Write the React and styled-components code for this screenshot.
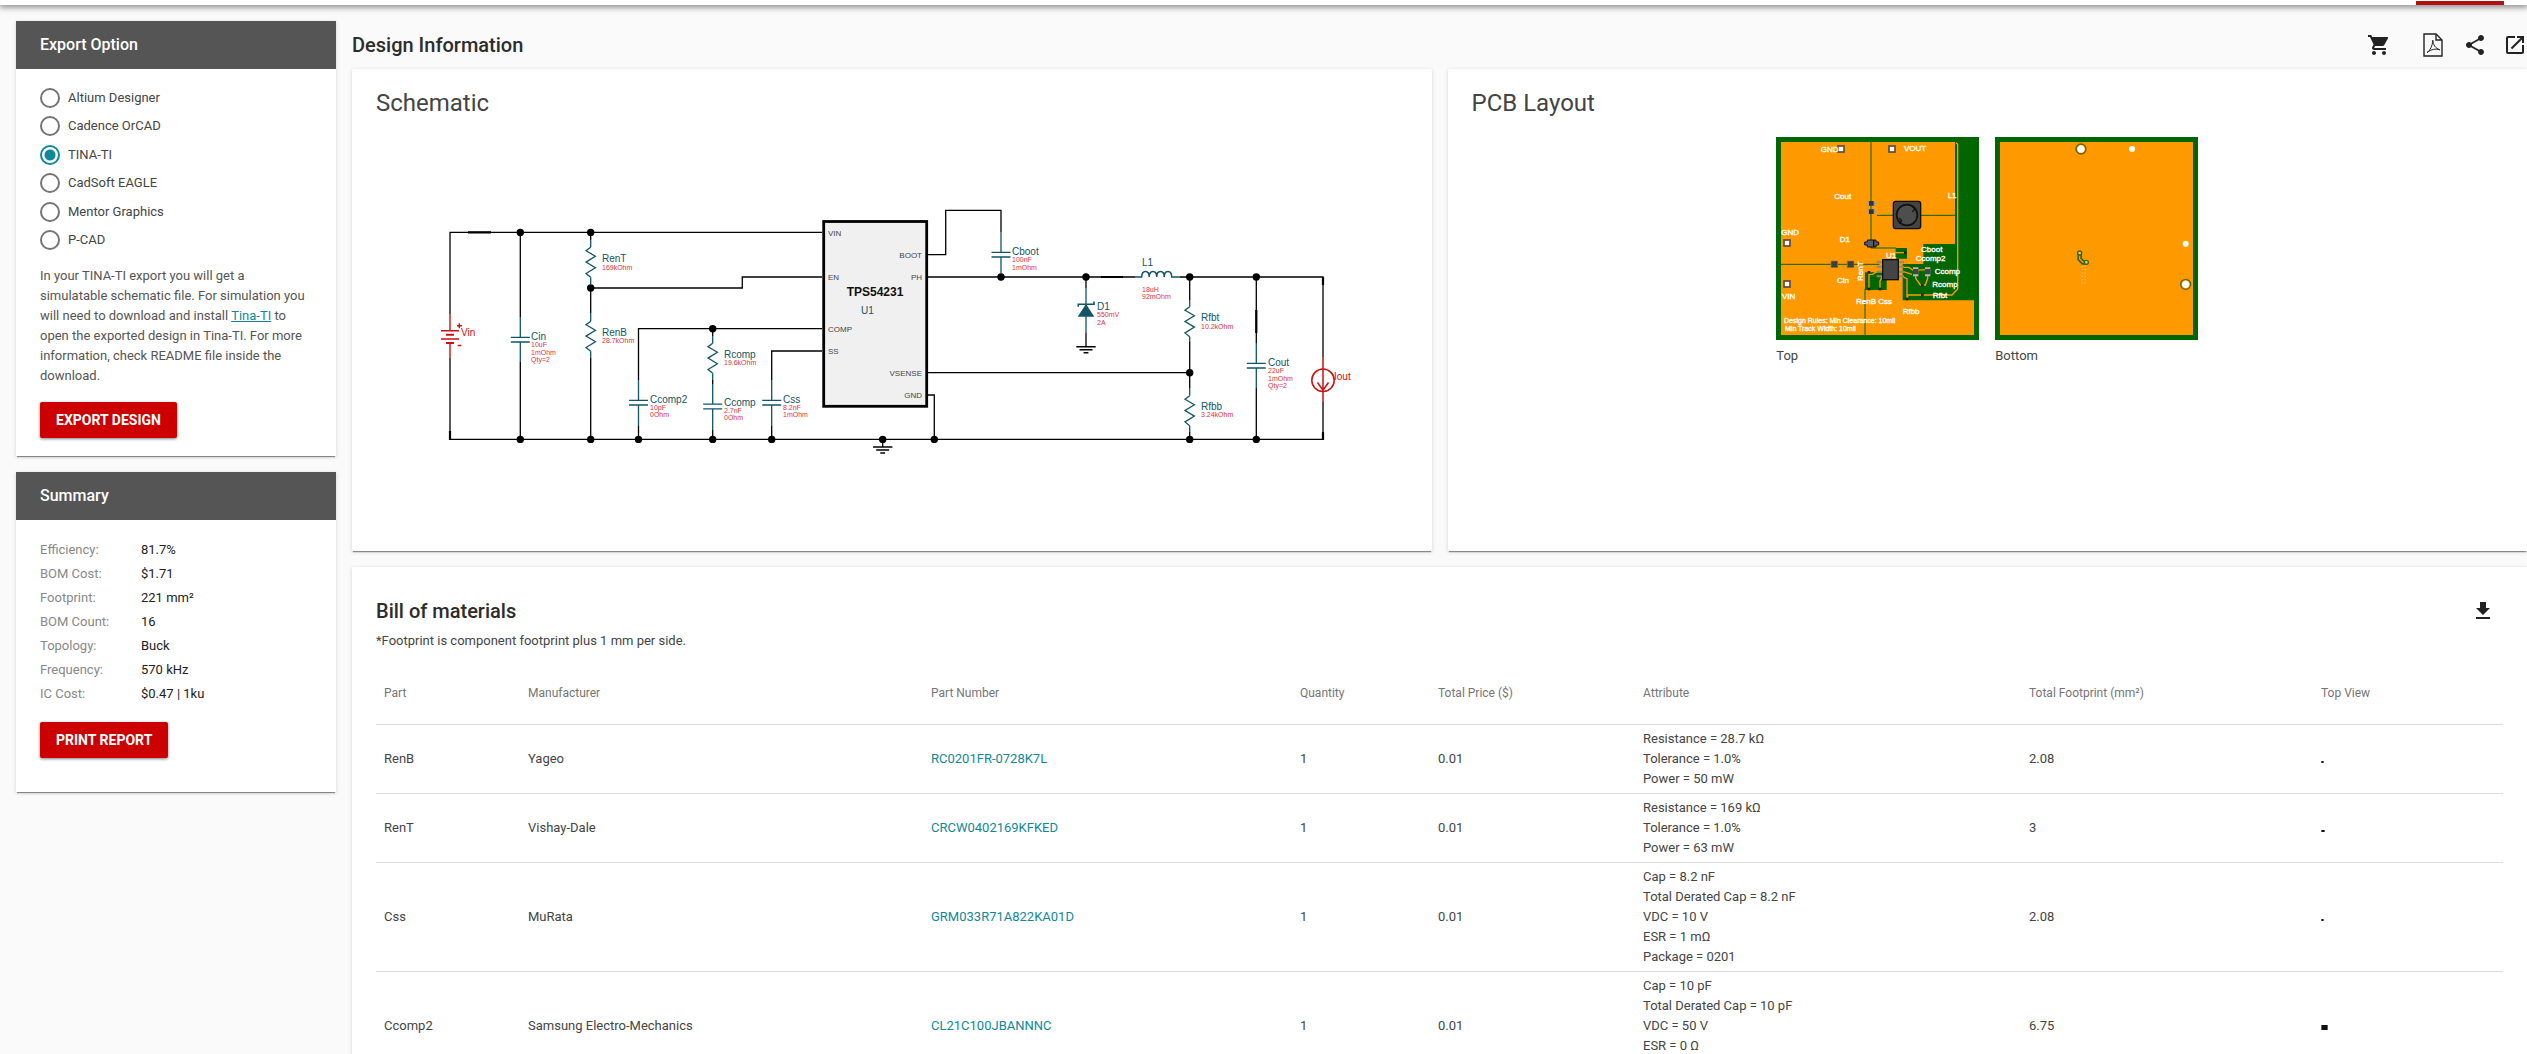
import React, { useState } from "react";
import styled, { createGlobalStyle } from "styled-components";
import { MdOpenInNew, MdShare, MdShoppingCart } from "react-icons/md";

const TEAL = "#118899";
const PART = "#115566";
const VALUE = "#dd3340";
const SOURCE = "#cc1111";
const ORANGE = "#ff9900";
const BOARD = "#006600";

const exportTools = [
  "Altium Designer",
  "Cadence OrCAD",
  "TINA-TI",
  "CadSoft EAGLE",
  "Mentor Graphics",
  "P-CAD",
];

const summary = [
  ["Efficiency:", "81.7%"],
  ["BOM Cost:", "$1.71"],
  ["Footprint:", "221 mm²"],
  ["BOM Count:", "16"],
  ["Topology:", "Buck"],
  ["Frequency:", "570 kHz"],
  ["IC Cost:", "$0.47 | 1ku"],
];

const columns = [
  { title: "Part", share: 144 },
  { title: "Manufacturer", share: 403 },
  { title: "Part Number", share: 369 },
  { title: "Quantity", share: 138 },
  { title: "Total Price ($)", share: 205 },
  { title: "Attribute", share: 386 },
  { title: "Total Footprint (mm²)", share: 292 },
  { title: "Top View", share: 190 },
];
const totalShare = columns.reduce((sum, { share }) => sum + share, 0);

const parts = [
  {
    part: "RenB",
    maker: "Yageo",
    number: "RC0201FR-0728K7L",
    quantity: 1,
    price: "0.01",
    attributes: ["Resistance = 28.7 kΩ", "Tolerance = 1.0%", "Power = 50 mW"],
    footprint: "2.08",
    view: [3, 2],
  },
  {
    part: "RenT",
    maker: "Vishay-Dale",
    number: "CRCW0402169KFKED",
    quantity: 1,
    price: "0.01",
    attributes: ["Resistance = 169 kΩ", "Tolerance = 1.0%", "Power = 63 mW"],
    footprint: "3",
    view: [4, 2],
  },
  {
    part: "Css",
    maker: "MuRata",
    number: "GRM033R71A822KA01D",
    quantity: 1,
    price: "0.01",
    attributes: [
      "Cap = 8.2 nF",
      "Total Derated Cap = 8.2 nF",
      "VDC = 10 V",
      "ESR = 1 mΩ",
      "Package = 0201",
    ],
    footprint: "2.08",
    view: [3, 2],
  },
  {
    part: "Ccomp2",
    maker: "Samsung Electro-Mechanics",
    number: "CL21C100JBANNNC",
    quantity: 1,
    price: "0.01",
    attributes: [
      "Cap = 10 pF",
      "Total Derated Cap = 10 pF",
      "VDC = 50 V",
      "ESR = 0 Ω",
      "Package = 0805",
    ],
    footprint: "6.75",
    view: [7, 5],
  },
];

/* ---------- schematic ---------- */

const Zigzag = ({ x, y }) => (
  <path
    d={`M${x} ${y}l-4.7 3.5 9.4 5.5-9.4 5.8 9.4 5.6-9.4 5.8 4.7 3.8`}
    fill="none"
    stroke={PART}
    strokeWidth="1.3"
  />
);

const Resistor = ({ x, from, y, to }) => (
  <g>
    <path d={`M${x} ${from}V${y}M${x} ${y + 30}V${to}`} stroke={PART} strokeWidth="1.3" />
    <Zigzag x={x} y={y} />
  </g>
);

const Capacitor = ({ x, from, y, to }) => (
  <path
    d={`M${x} ${from}V${y}M${x - 9.5} ${y}h19M${x - 9.5} ${y + 4.7}h19M${x} ${y + 4.7}V${to}`}
    stroke={PART}
    strokeWidth="1.3"
  />
);

const Ground = ({ x, y }) => (
  <path
    d={`M${x - 9.7} ${y}h19.4M${x - 6.5} ${y + 3}h13M${x - 2.4} ${y + 6}h4.8`}
    stroke="#000"
    strokeWidth="1.4"
  />
);

const Label = ({ x, y, name, values = [], offsets = [7, 15, 22] }) => (
  <g>
    <NameText x={x} y={y}>
      {name}
    </NameText>
    {values.map((value, i) => (
      <ValueText key={value} x={x} y={y + offsets[i]}>
        {value}
      </ValueText>
    ))}
  </g>
);

const junctions = [
  [520.3, 232.4],
  [590.7, 232.4],
  [590.7, 288],
  [712.7, 328.7],
  [520.3, 439.4],
  [590.7, 439.4],
  [638.5, 439.4],
  [712.7, 439.4],
  [771.7, 439.4],
  [882.7, 439.4],
  [934.3, 439.4],
  [1001, 277],
  [1086, 277],
  [1189.7, 277],
  [1256.3, 277],
  [1189.7, 372.7],
  [1189.7, 439.4],
  [1256.3, 439.4],
];

const leftPins = [
  ["VIN", 236],
  ["EN", 280],
  ["COMP", 332],
  ["SS", 354],
];

const rightPins = [
  ["BOOT", 258],
  ["PH", 280],
  ["VSENSE", 376],
  ["GND", 398],
];

function Schematic() {
  return (
    <SchematicDrawing viewBox="432 125 920 410" role="img" aria-label="Schematic">
      {/* wires */}
      <g fill="none" stroke="#000" strokeWidth="1.3">
        <path d="M450 314V232.4H822M450 358V439.4H1323V402" />
        <path d="M520.3 232.4V317M520.3 362V439.4" />
        <path d="M590.7 232.4V240M590.7 288V313M590.7 358V439.4" />
        <path d="M590.7 288H742.3V277H822" />
        <path d="M638.5 380V328.7H822M638.5 426V439.4" />
        <path d="M712.7 328.7V336M712.7 380V384M712.7 430V439.4" />
        <path d="M771.7 380V351H822M771.7 426V439.4" />
        <path d="M928 254.7H945.7V210.3H1001V232" />
        <path d="M928 277H1135M1180 277H1323V357" />
        <path d="M928 372.7H1189.7M928 395H934.3V439.4" />
        <path d="M882.7 439.4V447M1086 277V288M1086 333V346.7" />
        <path d="M1189.7 277V300M1189.7 342V388M1189.7 432V439.4" />
        <path d="M1256.3 277V343M1256.3 388V439.4" />
      </g>
      <g stroke="#000" strokeWidth="2.2">
        <path d="M468 232.4H491M1101 277H1123M1256.3 310V333" />
        <path d="M450 431V440M1323 277V285M1323 432V440" />
      </g>
      {junctions.map(([x, y]) => (
        <circle key={`${x}-${y}`} cx={x} cy={y} r="3.7" />
      ))}
      <Ground x={882.7} y={447} />
      <Ground x={1086} y={346.7} />

      {/* input source */}
      <g stroke={SOURCE}>
        <path
          d="M450 314V330.7M441 330.7H459M441 339H459M450 343V358M457 325.7h5M459.3 323.3v5M457.7 345.5h3.6"
          strokeWidth="1.4"
        />
        <path d="M446 334.8H454M446 343H454" strokeWidth="2" />
      </g>
      <NameText x="461" y="336" $source>
        Vin
      </NameText>

      <Capacitor x={520.3} from={317} y={337.3} to={362} />
      <Label x={531} y={340} name="Cin" values={["10uF", "1mOhm", "Qty=2"]} />

      <Resistor x={590.7} from={240} y={247.3} to={285} />
      <Label x={602} y={262} name="RenT" values={["169kOhm"]} offsets={[8]} />
      <Resistor x={590.7} from={313} y={321.3} to={358} />
      <Label x={602} y={336} name="RenB" values={["28.7kOhm"]} />

      <Capacitor x={638.5} from={380} y={400.3} to={426} />
      <Label x={650} y={403} name="Ccomp2" values={["10pF", "0Ohm"]} offsets={[7, 14]} />

      <Resistor x={712.7} from={336} y={343.3} to={380} />
      <Label x={724} y={358} name="Rcomp" values={["19.6kOhm"]} />
      <Capacitor x={712.7} from={384} y={404.2} to={430} />
      <Label x={724} y={406} name="Ccomp" values={["2.7nF", "0Ohm"]} offsets={[7, 14]} />

      <Capacitor x={771.7} from={380} y={400.3} to={426} />
      <Label x={783} y={403} name="Css" values={["8.2nF", "1mOhm"]} offsets={[7, 14]} />

      {/* regulator */}
      <rect x="823.7" y="221.5" width="103" height="184.8" fill="#f0f0f0" stroke="#000" strokeWidth="2.8" />
      {leftPins.map(([pin, y]) => (
        <PinText key={pin} x="828" y={y}>
          {pin}
        </PinText>
      ))}
      {rightPins.map(([pin, y]) => (
        <PinText key={pin} x="922" y={y} textAnchor="end">
          {pin}
        </PinText>
      ))}
      <ChipText x="875" y="296" textAnchor="middle">
        TPS54231
      </ChipText>
      <NameText x="861" y="314">
        U1
      </NameText>

      <Capacitor x={1001} from={232} y={252.3} to={274} />
      <Label x={1012} y={255} name="Cboot" values={["100nF", "1mOhm"]} />

      {/* catch diode */}
      <path d="M1086 288V333" stroke={PART} strokeWidth="1.3" />
      <path d="M1078.3 306.7V304.2H1094V301.5" fill="none" stroke={PART} strokeWidth="1.6" />
      <path d="M1086 304L1094.3 316.7H1077.7Z" fill={PART} />
      <Label x={1097} y={310} name="D1" values={["550mV", "2A"]} />

      {/* inductor */}
      <path
        d="M1135 277H1141.7c0-7.5 7.5-7.5 7.5 0c0-7.5 7.5-7.5 7.5 0c0-7.5 7.5-7.5 7.5 0c0-7.5 7.5-7.5 7.5 0H1180"
        fill="none"
        stroke={PART}
        strokeWidth="1.5"
      />
      <Label x={1142} y={266} name="L1" values={["18uH", "92mOhm"]} offsets={[26, 33]} />

      <Resistor x={1189.7} from={300} y={306.7} to={342} />
      <Label x={1201} y={321} name="Rfbt" values={["10.2kOhm"]} offsets={[8]} />
      <Resistor x={1189.7} from={388} y={395.7} to={432} />
      <Label x={1201} y={410} name="Rfbb" values={["3.24kOhm"]} />

      <Capacitor x={1256.3} from={343} y={363.3} to={388} />
      <Label x={1268} y={366} name="Cout" values={["22uF", "1mOhm", "Qty=2"]} />

      {/* load */}
      <g fill="none" stroke={SOURCE} strokeWidth="1.5">
        <path d="M1323 357V402M1317.5 382.5L1323 390.3L1328.5 382.5" />
        <circle cx="1323" cy="380.3" r="11.2" />
      </g>
      <NameText x="1334" y="380" $source>
        Iout
      </NameText>
    </SchematicDrawing>
  );
}

/* ---------- board ---------- */

const boardLabels = [
  ["GND", 134, 44],
  ["VOUT", 384, 43],
  ["Cout", 175, 185],
  ["L1", 515, 182],
  ["GND", 16, 293],
  ["D1", 191, 314],
  ["U1", 330, 363],
  ["Cboot", 435, 345],
  ["Ccomp2", 419, 371],
  ["Ccomp", 476, 411],
  ["Rcomp", 469, 450],
  ["Rfbt", 470, 482],
  ["RenB Css", 240, 500],
  ["Rfbb", 380, 530],
  ["Cin", 183, 437],
  ["VIN", 18, 485],
];

const terminals = [
  [195, 36],
  [348, 36],
  [33, 318],
  [33, 441],
];

const smallPads = [
  [279, 406],
  [279, 456],
  [312, 456],
  [439, 445],
  [439, 474],
  [393, 486],
  [388, 347],
];

function TopBoard() {
  return (
    <Board viewBox="0 0 609 609" role="img" aria-label="Top">
      <rect width="609" height="609" fill={BOARD} />
      <path
        d="M15 15H538V321H442V381H380V490H594V594H15Z"
        fill={ORANGE}
      />
      <path d="M359 333h34v32h-34zM267 406h65v53h-65z" fill={BOARD} />
      <path
        d="M285 15V333H360M303 235H538M15 382H310M267 455V594"
        fill="none"
        stroke={BOARD}
        strokeWidth="3"
      />
      <path d="M539 15V321" stroke={BOARD} strokeWidth="4" />
      <g fill="none" stroke={ORANGE} strokeWidth="4">
        <path d="M540 17L545 22V456L528 474H396L393 486V425L382 420" />
        <path d="M382 391H398L412 400L455 398M382 404L408 412M419 412V424L433 444H448L455 424V412" />
        <path d="M279 406V456M279 412H290L303 404M312 456V432L318 420" />
        <path d="M388 347H352" />
      </g>

      {/* L1 */}
      <rect x="352" y="193" width="82" height="82" rx="7" fill="#444" stroke="#111" strokeWidth="4" />
      <circle cx="393" cy="234" r="31" fill="#4e4e4e" stroke="#111" strokeWidth="5" />
      <path d="M409 208l8 8-8 8M369 243l8 8-8 8" fill="none" stroke="#111" strokeWidth="4" />

      {/* Cout, Cin */}
      <path d="M275 193h22v14h-22zM275 216h22v14h-22z" fill="#999" />
      <path d="M279 192h14v14h-14zM279 217h14v14h-14z" fill="#333" />
      <path d="M164 371h22v22h-22zM212 371h22v22h-22z" fill="#a67a33" />
      <path d="M166 373h18v18h-18zM215 373h18v18h-18z" fill="#3f3f3f" />

      {/* D1 */}
      <path d="M266 315h8v-6h26v6h8v9h-8v6h-26v-6h-8z" fill="#565d70" stroke="#111" strokeWidth="3" />
      <path d="M293 309v21" stroke="#111" strokeWidth="4" />

      {/* U1 */}
      <path
        d="M302 376h16M302 389h16M302 404h16M302 418h16M368 376h16M368 389h16M368 404h16M368 418h16"
        stroke="#8d8d6a"
        strokeWidth="6"
      />
      <rect x="320" y="368" width="47" height="60" fill="#444" stroke="#111" strokeWidth="4" />

      {/* Ccomp, Ccomp2 */}
      <path d="M411 391h16v27h-16zM447 391h16v27h-16z" fill="#b9b9b9" />
      <path d="M411 396h16v16h-16zM447 396h16v16h-16z" fill="#444" />
      {smallPads.map(([x, y]) => (
        <rect key={`${x}-${y}`} x={x - 4} y={y - 4} width="8" height="8" fill="#222" />
      ))}
      {terminals.map(([x, y]) => (
        <rect
          key={`${x}-${y}`}
          x={x - 9}
          y={y - 9}
          width="18"
          height="18"
          fill="#fff"
          stroke="#5d4a44"
          strokeWidth="5"
        />
      ))}

      {boardLabels.map(([text, x, y]) => (
        <SilkText key={`${text}-${y}`} x={x} y={y}>
          {text}
        </SilkText>
      ))}
      <SilkText transform="translate(261 432) rotate(-90)">RenT</SilkText>
      <SilkText x="24" y="558" $small>
        Design Rules: Min Clearance: 10mil
      </SilkText>
      <SilkText x="27" y="581" $small>
        Min Track Width: 10mil
      </SilkText>
    </Board>
  );
}

function BottomBoard() {
  const vias = [0, 1, 2, 3, 4, 5];
  return (
    <Board viewBox="0 0 609 609" role="img" aria-label="Bottom">
      <rect width="609" height="609" fill={BOARD} />
      <rect x="15" y="15" width="579" height="579" fill={ORANGE} />
      <g stroke="#5c6600" strokeWidth="4">
        <circle cx="258" cy="36" r="15" fill={ORANGE} />
        <circle cx="572" cy="442" r="15" fill={ORANGE} />
      </g>
      <g fill="#fff">
        <circle cx="258" cy="36" r="11" />
        <circle cx="572" cy="442" r="11" />
        <circle cx="411" cy="36" r="9" />
        <circle cx="572" cy="320" r="9" />
      </g>
      <g fill="none" strokeLinecap="round">
        <path d="M254 349V366L264 376H273" stroke="#336600" strokeWidth="14" />
        <path d="M254 349V366L264 376H273" stroke={ORANGE} strokeWidth="4" />
      </g>
      <g fill="#ffcc66" stroke="#336600" strokeWidth="4">
        <circle cx="254" cy="348" r="6" />
        <circle cx="274" cy="376" r="6" />
      </g>
      {vias.map((i) => (
        <path key={i} d={`M260 ${388 + i * 10}h3M269 ${388 + i * 10}h3`} stroke="#ffd9a0" strokeWidth="3" />
      ))}
    </Board>
  );
}

const PdfIcon = () => (
  <svg width="24" height="24" viewBox="0 0 24 24" fill="none" stroke="currentColor" aria-hidden="true">
    <path d="M1 1h12l6 6v16H1z" strokeWidth="1.4" />
    <path d="M13 1v6h6" strokeWidth="1.4" />
    <path
      d="M4 19.5c3-2 5.500-6.500 5.800-12.300.4 4.600 2.500 8 7 9.600-4.300-1.300-8.400-.6-12.800 2.700z"
      strokeWidth="1"
      strokeLinejoin="round"
    />
  </svg>
);

const DownloadIcon = () => (
  <svg width="24" height="24" viewBox="0 0 24 24" fill="currentColor" aria-hidden="true">
    <path d="M19 9h-4V3H9v6H5l7 7 7-7zM5 18v2h14v-2H5z" />
  </svg>
);

function ExportCard() {
  const [tool, setTool] = useState("TINA-TI");

  return (
    <Card as="section">
      <CardHead>Export Option</CardHead>
      <ExportBody>
        <Options>
          {exportTools.map((name) => (
            <Option key={name}>
              <Radio name="tool" value={name} checked={tool === name} onChange={() => setTool(name)} />
              {name}
            </Option>
          ))}
        </Options>
        <Hint>
          In your TINA-TI export you will get a simulatable schematic file. For simulation you will need to
          download and install <HintLink href="#tina">Tina-TI</HintLink> to open the exported design in
          Tina-TI. For more information, check README file inside the download.
        </Hint>
        <Button type="button">Export Design</Button>
      </ExportBody>
    </Card>
  );
}

function SummaryCard() {
  return (
    <Card as="section">
      <CardHead>Summary</CardHead>
      <SummaryBody>
        <Facts>
          {summary.map(([name, value]) => (
            <React.Fragment key={name}>
              <dt>{name}</dt>
              <dd>{value}</dd>
            </React.Fragment>
          ))}
        </Facts>
        <Button type="button">Print Report</Button>
      </SummaryBody>
    </Card>
  );
}

function Materials() {
  return (
    <MaterialsCard as="section">
      <MaterialsHead>
        <Heading>Bill of materials</Heading>
        <IconButton type="button" aria-label="Download">
          <DownloadIcon />
        </IconButton>
      </MaterialsHead>
      <Note>*Footprint is component footprint plus 1 mm per side.</Note>
      <Table>
        <colgroup>
          {columns.map(({ title, share }) => (
            <Column key={title} $width={(share / totalShare) * 100} />
          ))}
        </colgroup>
        <thead>
          <tr>
            {columns.map(({ title }) => (
              <th key={title}>{title}</th>
            ))}
          </tr>
        </thead>
        <tbody>
          {parts.map((item) => (
            <tr key={item.part}>
              <td>{item.part}</td>
              <td>{item.maker}</td>
              <td>
                <PartLink href={`#${item.number}`}>{item.number}</PartLink>
              </td>
              <td>{item.quantity}</td>
              <td>{item.price}</td>
              <td>
                {item.attributes.map((attribute) => (
                  <div key={attribute}>{attribute}</div>
                ))}
              </td>
              <td>{item.footprint}</td>
              <td>
                <svg width={item.view[0]} height={item.view[1]} aria-hidden="true">
                  <rect width="100%" height="100%" fill="#666" />
                  <rect x="1" width={item.view[0] - 2} height="100%" fill="#111" />
                </svg>
              </td>
            </tr>
          ))}
        </tbody>
      </Table>
    </MaterialsCard>
  );
}

function App() {
  return (
    <>
      <GlobalStyle />
      <Shell>
        <TopBar>
          <ActiveTab />
        </TopBar>
        <Page>
          <Sidebar>
            <ExportCard />
            <SummaryCard />
          </Sidebar>
          <Main>
            <Toolbar>
              <Heading>Design Information</Heading>
              <Actions>
                <IconButton type="button" aria-label="Order" $spaced>
                  <MdShoppingCart size={24} />
                </IconButton>
                <IconButton type="button" aria-label="Save as PDF">
                  <PdfIcon />
                </IconButton>
                <IconButton type="button" aria-label="Share">
                  <MdShare size={24} />
                </IconButton>
                <IconButton type="button" aria-label="Open">
                  <MdOpenInNew size={24} />
                </IconButton>
              </Actions>
            </Toolbar>
            <Drawings>
              <DrawingCard as="section">
                <CardTitle>Schematic</CardTitle>
                <Schematic />
              </DrawingCard>
              <DrawingCard as="section">
                <CardTitle>PCB Layout</CardTitle>
                <Boards>
                  <figure>
                    <TopBoard />
                    <figcaption>Top</figcaption>
                  </figure>
                  <figure>
                    <BottomBoard />
                    <figcaption>Bottom</figcaption>
                  </figure>
                </Boards>
              </DrawingCard>
            </Drawings>
            <Materials />
          </Main>
        </Page>
      </Shell>
    </>
  );
}

export default App;

const GlobalStyle = createGlobalStyle`
  * {
    box-sizing: border-box;
  }
  body {
    margin: 0;
    background: #fafafa;
    color: #444;
    font: 400 13px/20px Roboto, "Liberation Sans", sans-serif;
  }
`;

const Shell = styled.div`
  height: 100vh;
  overflow: hidden auto;
  scrollbar-width: none;
`;

const TopBar = styled.header`
  display: flex;
  align-items: flex-end;
  justify-content: flex-end;
  height: 5px;
  padding-right: 23px;
  background: #fff;
  box-shadow: 0 1px 6px 1px rgba(0, 0, 0, 0.5);
`;

const ActiveTab = styled.div`
  width: 88px;
  height: 4px;
  background: #b10f10;
`;

const Page = styled.div`
  display: grid;
  grid-template-columns: 320px minmax(0, 1fr);
  gap: 16px;
  align-items: start;
  padding: 16px 0 16px 16px;
`;

const Sidebar = styled.aside`
  display: grid;
  gap: 16px;
`;

const Main = styled.main`
  display: grid;
`;

const Card = styled.div`
  background: #fff;
  box-shadow: 0 2px 1px -1px rgba(0, 0, 0, 0.4), 0 1px 4px rgba(0, 0, 0, 0.16);
`;

const CardHead = styled.h2`
  margin: 0;
  padding: 0 24px;
  background: #555;
  color: #fff;
  font-size: 16px;
  font-weight: 500;
  line-height: 48px;
`;

const ExportBody = styled.div`
  padding: 19px 24px 18px;
`;

const Options = styled.div`
  display: flex;
  flex-direction: column;
  justify-content: space-between;
  height: 162px;
`;

const Option = styled.label`
  display: flex;
  align-items: center;
  gap: 8px;
  height: 20px;
`;

const Radio = styled.input.attrs({ type: "radio" })`
  appearance: none;
  width: 20px;
  height: 20px;
  margin: 0;
  border: 2px solid #757575;
  border-radius: 50%;
  &:checked {
    border-color: ${TEAL};
    background: radial-gradient(circle, ${TEAL} 5px, transparent 6px);
  }
`;

const Hint = styled.p`
  margin: 16px 0;
  color: #555;
`;

const HintLink = styled.a`
  color: ${TEAL};
`;

const Button = styled.button`
  height: 36px;
  padding: 0 16px;
  border: 0;
  border-radius: 2px;
  background: #cc0000;
  box-shadow: 0 1px 3px rgba(0, 0, 0, 0.5);
  color: #fff;
  font: 700 14px/36px Roboto, "Liberation Sans", sans-serif;
  text-transform: uppercase;
`;

const SummaryBody = styled.div`
  padding: 18px 24px 34px;
`;

const Facts = styled.dl`
  display: grid;
  grid-template-columns: 101px 1fr;
  margin: 0 0 16px;
  line-height: 24px;
  dt {
    color: #888;
  }
  dd {
    margin: 0;
    color: #222;
  }
`;

const Toolbar = styled.div`
  display: flex;
  align-items: center;
  justify-content: space-between;
  height: 48px;
`;

const Heading = styled.h2`
  margin: 0;
  color: #2c2c2c;
  font-size: 20px;
  font-weight: 500;
  line-height: 24px;
`;

const Actions = styled.div`
  display: flex;
  gap: 16px;
`;

const IconButton = styled.button`
  display: flex;
  padding: 0;
  margin-right: ${({ $spaced }) => ($spaced ? "16px" : "0")};
  border: 0;
  background: none;
  color: #222;
`;

const Drawings = styled.div`
  display: grid;
  grid-template-columns: repeat(2, minmax(0, 1fr));
  gap: 16px;
`;

const DrawingCard = styled(Card)`
  display: flex;
  flex-direction: column;
  align-items: center;
  padding: 20px 24px 16px;
`;

const CardTitle = styled.h3`
  align-self: stretch;
  margin: 0;
  font-size: 24px;
  font-weight: 400;
  line-height: 28px;
`;

const SchematicDrawing = styled.svg`
  width: 920px;
  max-width: 100%;
  margin-top: 8px;
  font-family: "Liberation Sans", Arial, sans-serif;
`;

const NameText = styled.text`
  fill: ${({ $source }) => ($source ? SOURCE : PART)};
  font-size: 10px;
`;

const ValueText = styled.text`
  fill: ${VALUE};
  font-size: 7px;
`;

const PinText = styled.text`
  fill: #444;
  font-size: 8px;
`;

const ChipText = styled.text`
  fill: #111;
  font-size: 12px;
  font-weight: 700;
`;

const Boards = styled.div`
  display: flex;
  gap: 16px;
  margin-top: 20px;
  figure {
    margin: 0;
  }
  figcaption {
    margin-top: 6px;
  }
`;

const Board = styled.svg`
  display: block;
  width: 203px;
  height: 203px;
  font-family: "Liberation Sans", Arial, sans-serif;
`;

const SilkText = styled.text`
  fill: #fff;
  stroke: #fff;
  stroke-width: 1px;
  font-size: ${({ $small }) => ($small ? "21px" : "24px")};
`;

const MaterialsCard = styled(Card)`
  margin-top: 16px;
  padding: 32px 24px 24px;
`;

const MaterialsHead = styled.div`
  display: flex;
  justify-content: space-between;
  padding-right: 8px;
`;

const Note = styled.p`
  margin: 8px 0 10px;
`;

const Table = styled.table`
  width: 100%;
  border-collapse: separate;
  border-spacing: 0;
  table-layout: fixed;
  th {
    height: 64px;
    padding: 0 8px;
    border-bottom: 1px solid #ddd;
    color: #757575;
    font-size: 12px;
    font-weight: 400;
    text-align: left;
  }
  td {
    padding: 4px 8px;
    border-bottom: 1px solid #ddd;
  }
`;

const Column = styled.col`
  width: ${({ $width }) => $width}%;
`;

const PartLink = styled.a`
  color: ${TEAL};
  text-decoration: none;
`;
